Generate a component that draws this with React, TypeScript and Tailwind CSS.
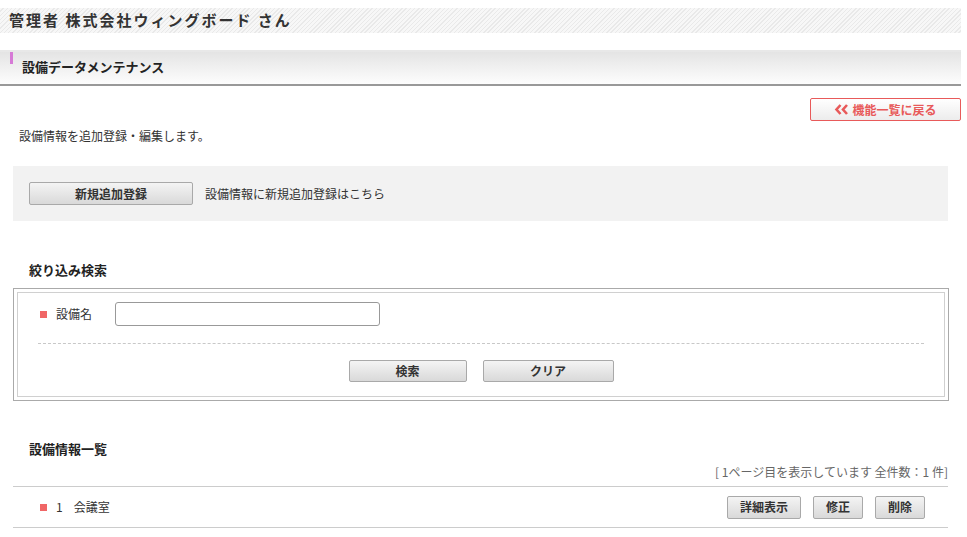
import React from "react";

const btn =
  "h-[22px] border border-[#a9a9a9] rounded-[2px] bg-[linear-gradient(#f4f4f4,#d9d9d9)] text-[12px] font-bold text-[#333] flex items-center justify-center";

export default function App() {
  return (
    <div
      className="w-[967px] h-[537px] bg-white text-[#333] overflow-hidden"
      style={{ fontFamily: '"Noto Sans CJK JP", "Noto Sans", sans-serif' }}
    >
      <div className="pt-[8px] pr-[6px]">
        <div className="h-[25px] bg-[image:repeating-linear-gradient(135deg,#f7f7f7_0px,#f7f7f7_2px,#e9e9e9_2px,#e9e9e9_3px)] flex items-center pl-[9px]">
          <span className="text-[15px] font-bold tracking-[2px] text-[#333] leading-none -mt-[2px]">
            管理者 株式会社ウィングボード さん
          </span>
        </div>
      </div>

      <div className="mt-[17px] mr-[6px] border-t-[2px] border-[#e8e8e8]">
        <div className="h-[34px] bg-[linear-gradient(#e4e4e4,#fdfdfd)] border-b-[2px] border-[#999] flex items-start pl-[10px]">
          <div className="w-[3px] h-[12px] bg-[#d67ad6]" />
          <span className="ml-[9px] mt-[5px] text-[13px] font-bold text-[#222]">設備データメンテナンス</span>
        </div>
      </div>

      <div className="flex justify-end pr-[6px] mt-[12px]">
        <div className="w-[151px] h-[23px] border border-[#e85a5a] rounded-[2px] bg-[linear-gradient(#ffffff,#ececec)] flex items-center justify-center text-[12px] font-bold text-[#e85a5a]">
          <svg width="15" height="11" viewBox="0 0 15 11" className="mr-[3px]">
            <path d="M6.5 1 L2.5 5.5 L6.5 10" stroke="#e85a5a" strokeWidth="2.6" fill="none" />
            <path d="M13 1 L9 5.5 L13 10" stroke="#e85a5a" strokeWidth="2.6" fill="none" />
          </svg>
          機能一覧に戻る
        </div>
      </div>

      <div className="pl-[19px] mt-[6px] text-[12px] leading-[18px]">設備情報を追加登録・編集します。</div>

      <div className="ml-[13px] w-[935px] h-[55px] mt-[21px] bg-[#f2f2f2] flex items-center pl-[16px]">
        <div className={btn + " w-[164px] h-[23px]"}>新規追加登録</div>
        <span className="ml-[12px] text-[12px]">設備情報に新規追加登録はこちら</span>
      </div>

      <div className="pl-[29px] mt-[40px] text-[13px] font-bold text-[#222] leading-[18px]">絞り込み検索</div>

      <div className="ml-[13px] w-[936px] mt-[9px] border border-[#aaa] p-[3px]">
        <div className="border border-[#d0d0d0] h-[105px] px-[20px]">
          <div className="flex items-center h-[50px] pb-[8px]">
            <div className="w-[7px] h-[7px] bg-[#f06666] ml-[2px]" />
            <span className="ml-[9px] text-[12px]">設備名</span>
            <div className="ml-[23px] w-[265px] h-[24px] border border-[#999] rounded-[3px] bg-white" />
          </div>
          <div className="border-t border-dashed border-[#c8c8c8]" />
          <div className="flex justify-center gap-[16px] mt-[16px]">
            <div className={btn + " w-[118px]"}>検索</div>
            <div className={btn + " w-[131px]"}>クリア</div>
          </div>
        </div>
      </div>

      <div className="pl-[29px] mt-[39px] text-[13px] font-bold text-[#222] leading-[18px]">設備情報一覧</div>
      <div className="w-[948px] text-right text-[12px] text-[#666] mt-[6px] leading-[16px]">
        [ 1ページ目を表示しています 全件数：1 件]
      </div>

      <div className="ml-[13px] w-[935px] mt-[6px] border-t border-b border-[#ccc] h-[42px] flex items-center">
        <div className="w-[7px] h-[7px] bg-[#f06666] ml-[27px]" />
        <span className="ml-[9px] text-[12px]">1</span>
        <span className="ml-[11px] text-[12px]">会議室</span>
        <div className="ml-auto flex gap-[12px] mr-[23px]">
          <div className={btn + " w-[74px] h-[23px]"}>詳細表示</div>
          <div className={btn + " w-[50px] h-[23px]"}>修正</div>
          <div className={btn + " w-[50px] h-[23px]"}>削除</div>
        </div>
      </div>
    </div>
  );
}
